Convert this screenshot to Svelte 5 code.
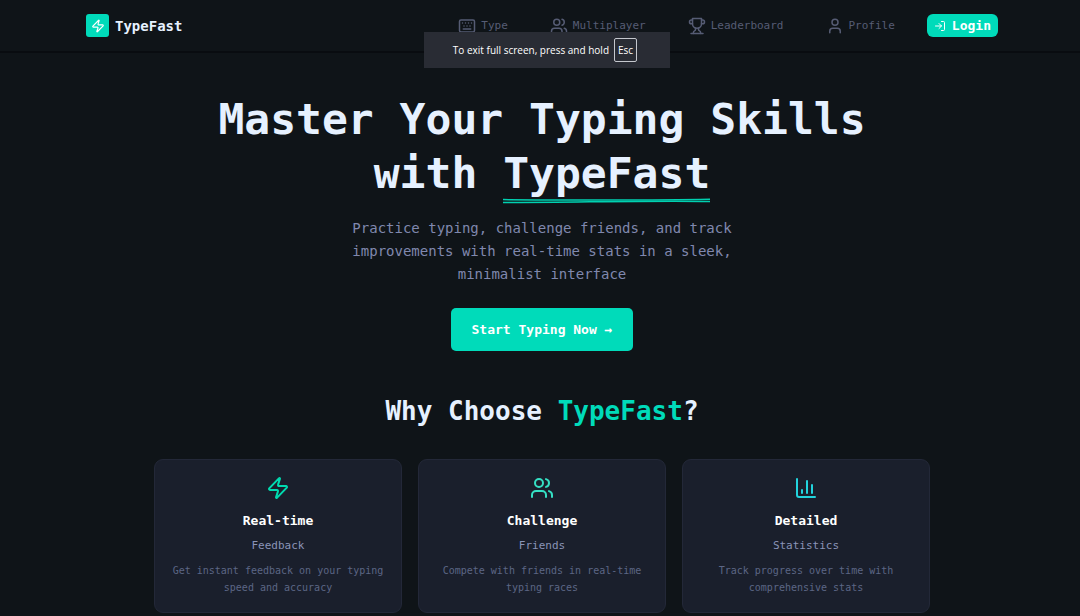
<script>
  const icons = {
    zap: [
      'M4 14a1 1 0 0 1-.78-1.63l9.9-10.2a.5.5 0 0 1 .86.46l-1.92 6.02A1 1 0 0 0 13 10h7a1 1 0 0 1 .78 1.63l-9.9 10.2a.5.5 0 0 1-.86-.46l1.92-6.02A1 1 0 0 0 11 14z'
    ],
    keyboard: [
      'M4 4h16a2 2 0 0 1 2 2v12a2 2 0 0 1-2 2H4a2 2 0 0 1-2-2V6a2 2 0 0 1 2-2z',
      'M6 8h.01M10 8h.01M14 8h.01M18 8h.01M8 12h.01M12 12h.01M16 12h.01M7 16h10'
    ],
    users: [
      'M16 21v-2a4 4 0 0 0-4-4H6a4 4 0 0 0-4 4v2',
      'M9 3a4 4 0 1 0 0 8a4 4 0 0 0 0-8z',
      'M22 21v-2a4 4 0 0 0-3-3.87',
      'M16 3.13a4 4 0 0 1 0 7.75'
    ],
    trophy: [
      'M6 9H4.5a2.5 2.5 0 0 1 0-5H6',
      'M18 9h1.5a2.5 2.5 0 0 0 0-5H18',
      'M4 22h16',
      'M10 14.66V17c0 .55-.47.98-.97 1.21C7.85 18.75 7 20.24 7 22',
      'M14 14.66V17c0 .55.47.98.97 1.21C16.15 18.75 17 20.24 17 22',
      'M18 2H6v7a6 6 0 0 0 12 0V2z'
    ],
    user: ['M19 21v-2a4 4 0 0 0-4-4H9a4 4 0 0 0-4 4v2', 'M12 3a4 4 0 1 0 0 8a4 4 0 0 0 0-8z'],
    login: ['M15 3h4a2 2 0 0 1 2 2v14a2 2 0 0 1-2 2h-4', 'M10 17l5-5-5-5', 'M15 12H3'],
    chart: ['M3 3v16a2 2 0 0 0 2 2h16', 'M18 17V9', 'M13 17V5', 'M8 17v-3']
  };

  const links = [
    { label: 'Type', icon: 'keyboard', href: '#type' },
    { label: 'Multiplayer', icon: 'users', href: '#multiplayer' },
    { label: 'Leaderboard', icon: 'trophy', href: '#leaderboard' },
    { label: 'Profile', icon: 'user', href: '#profile' }
  ];

  const features = [
    {
      icon: 'zap',
      tone: 'green',
      title: 'Real-time',
      subtitle: 'Feedback',
      text: 'Get instant feedback on your typing speed and accuracy'
    },
    {
      icon: 'users',
      tone: 'teal',
      title: 'Challenge',
      subtitle: 'Friends',
      text: 'Compete with friends in real-time typing races'
    },
    {
      icon: 'chart',
      tone: 'cyan',
      title: 'Detailed',
      subtitle: 'Statistics',
      text: 'Track progress over time with comprehensive stats'
    }
  ];
</script>

{#snippet icon(name)}
  <svg class="icon" viewBox="0 0 24 24" aria-hidden="true">
    {#each icons[name] as d}
      <path {d} />
    {/each}
  </svg>
{/snippet}

<div class="page">
  <header>
    <nav class="navbar">
      <a class="brand" href="#home">
        <span class="logo">{@render icon('zap')}</span>
        TypeFast
      </a>
      <div class="menu">
        <div class="links">
          {#each links as link}
            <a href={link.href}>{@render icon(link.icon)}{link.label}</a>
          {/each}
        </div>
        <button type="button" class="login">{@render icon('login')}Login</button>
      </div>
    </nav>
  </header>

  <main>
    <section class="hero">
      <h1>
        Master Your Typing Skills <br />with
        <span class="marked">TypeFast<svg
            class="underline"
            viewBox="0 0 206 6"
            preserveAspectRatio="none"
            aria-hidden="true"
          >
            <path d="M0 1.6C60 2 140 2.6 206 1.2" />
            <path d="M0 4.4C60 4.8 140 2.2 206 3.4" />
          </svg></span>
      </h1>
      <p>
        Practice typing, challenge friends, and track improvements with real-time stats in a sleek,
        minimalist interface
      </p>
      <button type="button" class="start">Start Typing Now →</button>
    </section>

    <section class="features">
      <h2>Why Choose <span>TypeFast</span>?</h2>
      <div class="cards">
        {#each features as feature}
          <article class="card">
            <div class="card-icon {feature.tone}">{@render icon(feature.icon)}</div>
            <h3>{feature.title}</h3>
            <p class="subtitle">{feature.subtitle}</p>
            <p class="text">{feature.text}</p>
          </article>
        {/each}
      </div>
    </section>
  </main>
</div>

<div class="toast" role="status">
  To exit full screen, press and hold <kbd>Esc</kbd>
</div>

<style>
  :global(body) {
    margin: 0;
    background: #0f1418;
    overflow-x: hidden;
  }

  .page {
    padding-left: 4px;
    overflow: hidden;
    font-family: 'DejaVu Sans Mono', monospace;
    color: #e6f1ff;
  }

  h1,
  h2,
  h3,
  p {
    margin: 0;
  }

  a {
    color: inherit;
    text-decoration: none;
  }

  button {
    border: 0;
    font-family: inherit;
    font-size: 13px;
    font-weight: 700;
    color: #fff;
    background: #00dbba;
    cursor: pointer;
  }

  .icon {
    display: block;
    flex: none;
    width: 18px;
    height: 18px;
    fill: none;
    stroke: currentColor;
    stroke-width: 2;
    stroke-linecap: round;
    stroke-linejoin: round;
  }

  header {
    margin-left: -4px;
    padding-left: 4px;
    border-bottom: 2px solid #090c10;
  }

  .navbar {
    display: flex;
    align-items: center;
    justify-content: space-between;
    max-width: 912px;
    height: 51px;
    margin: 0 auto;
  }

  .brand {
    display: flex;
    align-items: center;
    gap: 6px;
    font-size: 14px;
    font-weight: 700;
  }

  .logo {
    display: grid;
    place-items: center;
    width: 23px;
    height: 23px;
    border-radius: 3px;
    color: #fff;
    background: #00dbba;
  }

  .logo .icon {
    width: 14px;
    height: 14px;
  }

  .menu {
    display: flex;
    align-items: center;
    gap: 32px;
  }

  .links {
    display: flex;
    gap: 42px;
    font-size: 11px;
    color: #565c74;
  }

  .links a {
    display: flex;
    align-items: center;
    gap: 5px;
  }

  .login {
    display: flex;
    align-items: center;
    gap: 6px;
    height: 23px;
    padding: 0 7px;
    border-radius: 6px;
  }

  .login .icon {
    width: 12px;
    height: 12px;
  }

  .hero {
    display: flex;
    flex-direction: column;
    align-items: center;
    padding-top: 39px;
    text-align: center;
  }

  h1 {
    max-width: 700px;
    font-size: 43px;
    line-height: 54px;
  }

  .marked {
    position: relative;
  }

  .underline {
    position: absolute;
    left: 0;
    bottom: -6px;
    width: 100%;
    height: 6px;
    fill: none;
    stroke: #00d0b0;
    stroke-width: 1.5;
  }

  .hero p {
    max-width: 400px;
    margin-top: 17px;
    font-size: 14px;
    line-height: 23px;
    color: #8088ae;
  }

  .start {
    height: 43px;
    margin-top: 22px;
    padding: 0 21px;
    border-radius: 5px;
  }

  .features {
    max-width: 776px;
    margin: 0 auto;
    padding: 44px 16px 16px;
  }

  h2 {
    font-size: 26px;
    line-height: 32px;
    text-align: center;
  }

  h2 span {
    color: #00dbba;
  }

  .cards {
    display: grid;
    grid-template-columns: repeat(3, 1fr);
    gap: 16px;
    margin-top: 32px;
  }

  .card {
    padding: 16px;
    border: 1px solid #232838;
    border-radius: 9px;
    text-align: center;
    background: #1a1f2c;
  }

  .card-icon {
    display: flex;
    justify-content: center;
  }

  .card-icon .icon {
    width: 24px;
    height: 24px;
  }

  .green {
    color: #00dbb0;
  }

  .teal {
    color: #35e0c4;
  }

  .cyan {
    color: #22d3dd;
  }

  h3 {
    margin-top: 11px;
    font-size: 13px;
    line-height: 20px;
    color: #fff;
  }

  .subtitle {
    margin-top: 5px;
    font-size: 11px;
    line-height: 20px;
    color: #8a94b8;
  }

  .text {
    margin-top: 6px;
    font-size: 10px;
    line-height: 17px;
    color: #5c6685;
  }

  .toast {
    position: fixed;
    top: 32px;
    left: 50%;
    display: flex;
    align-items: center;
    justify-content: center;
    gap: 5px;
    box-sizing: border-box;
    width: 246px;
    height: 36px;
    margin-left: -116px;
    padding-right: 4px;
    font-family: 'Open Sans', sans-serif;
    font-size: 10px;
    color: #fff;
    background: #292c34;
  }

  kbd {
    padding: 0 3px;
    border: 1px solid #c5c8ce;
    border-radius: 2px;
    font-family: inherit;
    line-height: 22px;
  }
</style>
